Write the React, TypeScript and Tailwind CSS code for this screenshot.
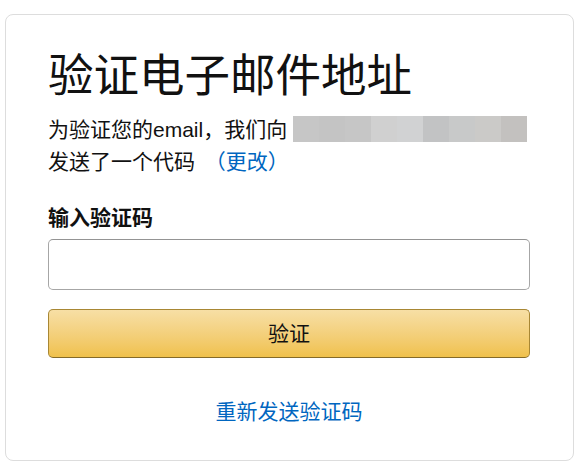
import React from "react";

const FONT = { fontFamily: '"Liberation Sans", "Noto Sans CJK SC", sans-serif' };

const maskShades = [
  "bg-[#c6c6c6]",
  "bg-[#c4c4c4]",
  "bg-[#c6c6c6]",
  "bg-[#d0d0d0]",
  "bg-[#d1d2d3]",
  "bg-[#c2c3c4]",
  "bg-[#c8c9c9]",
  "bg-[#cbcac8]",
  "bg-[#c3c1bf]",
];

function MaskedEmail() {
  return (
    <span className="inline-flex align-[-5px] h-[26px] ml-[6px]">
      {maskShades.map((c, i) => (
        <span key={i} className={`${c} w-[26px] h-[26px]`} />
      ))}
    </span>
  );
}

export default function App() {
  return (
    <div className="min-h-[472px] bg-white pt-[14px] pl-[5px] text-[#111]" style={FONT}>
      <div className="w-[569px] h-[447px] border border-[#dddddd] rounded-[8px] pt-[35px] pl-[42px] pr-[43px]">
        <h1 className="text-[45.5px] leading-[54px] font-normal">验证电子邮件地址</h1>
        <p className="mt-[10px] text-[21px] leading-[32px]">
          为验证您的email，我们向
          <MaskedEmail />
          <br />
          发送了一个代码 <a className="text-[#0066c0] ml-[4px]">（更改）</a>
        </p>
        <label className="block mt-[24px] text-[21px] leading-[32px] font-bold">输入验证码</label>
        <input
          className="mt-[5px] block w-full h-[51px] border border-[#a6a6a6] border-t-[#949494] rounded-[5px] px-3 text-[21px] outline-none"
          type="text"
        />
        <button className="mt-[19px] w-full h-[49px] rounded-[5px] border border-[#a88734] border-b-[#846a29] bg-gradient-to-b from-[#f7dfa5] to-[#f0c14b] text-[21px] text-[#111]">
          验证
        </button>
        <div className="mt-[38px] text-center text-[21px] leading-[32px]">
          <a className="text-[#0066c0]">重新发送验证码</a>
        </div>
      </div>
    </div>
  );
}
